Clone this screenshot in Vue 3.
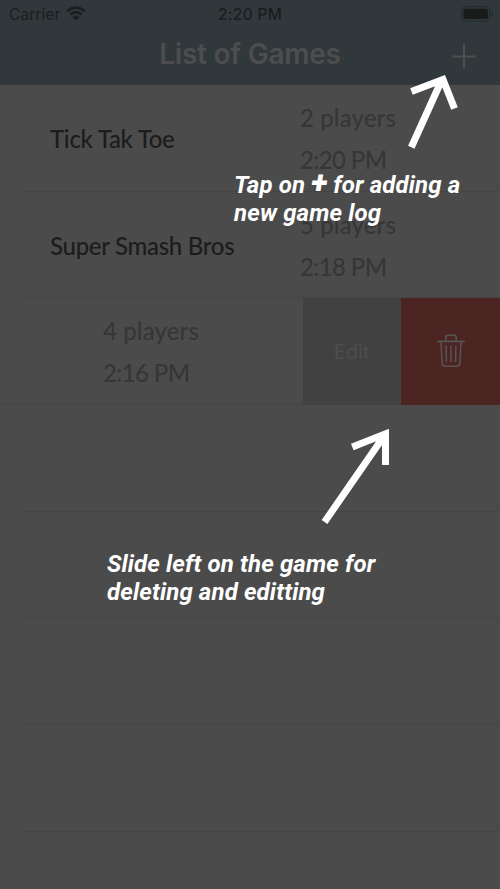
<script setup>
const games = [
  { name: 'Tick Tak Toe', players: '2 players', time: '2:20 PM' },
  { name: 'Super Smash Bros', players: '5 players', time: '2:18 PM' },
]
</script>

<template>
  <main class="screen">
    <header>
      <div class="status">
        <span class="carrier">Carrier</span>
        <svg class="wifi" width="20" height="15" viewBox="0 0 20 15">
          <g fill="none" stroke="#1b1d1e" stroke-width="2.6">
            <path d="M1 5.3Q10 -2.3 19 5.3" />
            <path d="M4.2 8.7Q10 3.7 15.8 8.7" />
          </g>
          <path d="M6.4 11Q10 7.8 13.6 11L10 14.6Z" fill="#1b1d1e" />
        </svg>
        <span class="clock">2:20 PM</span>
        <svg class="battery" width="33" height="16" viewBox="0 0 33 16">
          <rect x=".8" y=".8" width="28" height="14.2" rx="4" fill="none" stroke="#23282a" stroke-width="1.1" />
          <rect x="2.5" y="2.7" width="24.5" height="10.4" rx="2.2" fill="#191a1a" />
          <path d="M30.5 5.5Q32 6 32 8T30.5 10.5Z" fill="#23282a" />
        </svg>
      </div>
      <div class="nav">
        <h1>List of Games</h1>
        <svg class="add" width="24" height="25" viewBox="0 0 24 25">
          <path d="M12 .5V24.5M.5 12.5H23.5" stroke="#4f4f4f" stroke-width="2" fill="none" />
        </svg>
      </div>
    </header>

    <section class="list">
      <article v-for="game in games" :key="game.name" class="row">
        <span class="name">{{ game.name }}</span>
        <div class="info">
          <span class="players">{{ game.players }}</span>
          <span class="time">{{ game.time }}</span>
        </div>
      </article>
      <article class="row swiped">
        <div class="info">
          <span class="players">4 players</span>
          <span class="time">2:16 PM</span>
        </div>
        <div class="edit">Edit</div>
        <div class="trash">
          <svg width="28" height="34" viewBox="0 0 28 34" fill="none" stroke="#565353" stroke-width="1.6" stroke-linecap="round" stroke-linejoin="round">
            <path d="M1 7.4H27" stroke-width="1.9" />
            <path d="M8.8 7V3.8Q8.8 1.2 11.3 1.2H16.7Q19.2 1.2 19.2 3.8V7" />
            <path d="M4 8L5.2 29.3Q5.4 32.3 8.2 32.3H19.8Q22.6 32.3 22.8 29.3L24 8" />
            <path d="M9.1 12L9.4 27.5M14 12V27.5M18.9 12L18.6 27.5" />
          </svg>
        </div>
      </article>
      <article v-for="n in 5" :key="n" class="row"></article>
    </section>

    <div class="coach">
      <svg class="arrows" width="500" height="889" viewBox="0 0 500 889" fill="none" stroke="#fff" stroke-width="7">
        <path d="M411.3 147.3L441.5 80.5M411.5 91.5L443 79.6L454.5 108.5" />
        <path d="M324.5 522L383 437.5M352.3 447L385.5 433.8V465" />
      </svg>
      <p class="tip add-tip"><span class="line">Tap on <b>+</b> for adding a</span><span class="line">new game log</span></p>
      <p class="tip swipe-tip"><span class="line">Slide left on the game for</span><span class="line">deleting and editting</span></p>
    </div>
  </main>
</template>

<style>
body { background: #4b4b4b; margin: 0; }
</style>

<style scoped>
.screen { position: relative; width: 500px; height: 889px; overflow: hidden; background: #4b4b4b; font-family: Inter, sans-serif; }
header { height: 85.2px; background: #30383b; }
.status { height: 27px; display: grid; grid-template-columns: 57px 160px 1fr 39px; align-items: center; padding-left: 9px; box-sizing: border-box; color: #1b1d1e; font-size: 15.5px; line-height: 27px; white-space: nowrap; }
.carrier { letter-spacing: .1px; padding-top: 1px; }
.wifi { margin-top: -1px; }
.clock { font-weight: 500; letter-spacing: .3px; margin-left: -8px; padding-top: 1px; }
.battery { margin-top: -1px; }
.nav { height: 57px; display: grid; grid-template-columns: 1fr 47px; align-items: center; }
h1 { margin: -3px 0 0 47px; text-align: center; font-size: 28px; line-height: 34px; font-weight: 600; letter-spacing: -.25px; color: #4d4d4d; }
.add { margin: 1px 0 0 -1px; }
.list { font-family: Lato, sans-serif; }
.row { height: 106.65px; display: flex; box-sizing: border-box; padding-left: 50px; color: #363636; background: linear-gradient(#444, #444) 20px 100% / 480px 1px no-repeat; }
.name { width: 250px; padding-top: 38px; box-sizing: border-box; font-size: 24px; line-height: 32px; font-weight: 500; letter-spacing: -.3px; color: #1c1c1c; white-space: nowrap; }
.info { display: flex; flex-direction: column; padding-top: 11.7px; font-size: 24px; line-height: 42.2px; letter-spacing: .12px; font-weight: 500; white-space: nowrap; }
.time { letter-spacing: -.6px; }
.swiped { padding-left: 103px; background-position: 0 100%; background-size: 100% 1px; }
.swiped .info { width: 199.7px; }
.edit, .trash { flex: 1; display: flex; align-items: center; justify-content: center; }
.edit { background: #414141; color: #4d4d4d; font: 400 19.5px Inter, sans-serif; letter-spacing: .3px; }
.trash { background: #4c2422; padding-bottom: 2px; }
.coach { position: absolute; inset: 0; }
.arrows { position: absolute; left: 0; top: 0; }
.tip { position: absolute; margin: 0; color: #fff; font: italic 700 24px/28px Roboto, sans-serif; letter-spacing: .13px; white-space: nowrap; }
.line { display: block; }
.tip b { font-size: 31px; line-height: 0; }
.add-tip { left: 234px; top: 171px; }
.swipe-tip { left: 107px; top: 550px; }
</style>
